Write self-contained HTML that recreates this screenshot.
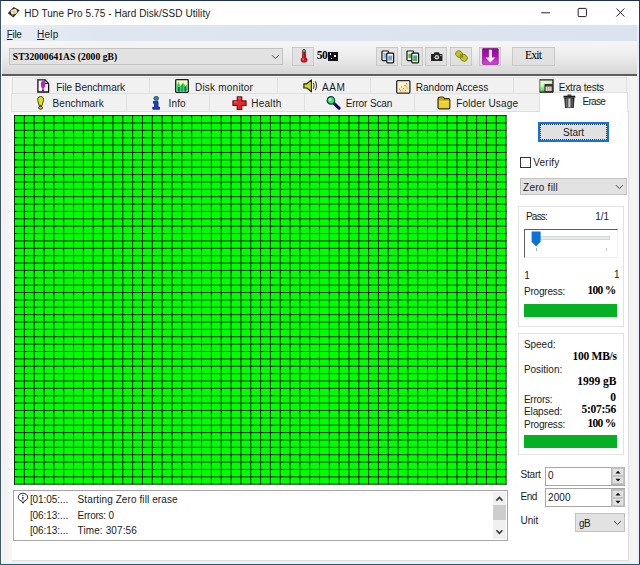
<!DOCTYPE html>
<html lang="en"><head><meta charset="utf-8"><title>HD Tune Pro 5.75 - Hard Disk/SSD Utility</title>
<style>
html,body{margin:0;padding:0}
body{width:640px;height:565px;position:relative;overflow:hidden;background:#f0f0f0;font:10px 'Liberation Sans',sans-serif;color:#000}
body *{position:absolute;box-sizing:border-box}
.t{white-space:pre;line-height:14px;height:14px;color:#1a1a1a}
.t u{position:static;text-decoration:underline;text-underline-offset:1px}
.sf{font-family:'Liberation Serif',serif;font-weight:bold;color:#000}
.sr{font-family:'Liberation Serif',serif;color:#000}
#frame{left:0;top:0;width:640px;height:565px;background:#2f3a50;border-left:1px solid #3d5566;border-top:0.8px solid #1e2f50;border-bottom:1.5px solid #256074}
#win{left:1px;top:0.75px;width:637.9px;height:562.8px;background:#f0f0f0}
#title{left:1px;top:0.75px;width:637.9px;height:23.85px;background:#fff}
#menu{left:1px;top:24.6px;width:637.9px;height:16.2px;background:linear-gradient(90deg,#eaeef5 0%,#dfe6f0 15%,#dbe3ee 100%)}
#tool{left:1px;top:40.8px;width:637.9px;height:33.5px;background:linear-gradient(#f1f3f6 0%,#f5f5f5 6%,#ececec 48%,#d6d6d6 100%)}
#sep{left:1px;top:73.9px;width:637.9px;height:1.7px;background:#5c5c5c}
#page{left:10.6px;top:111.2px;width:618.6px;height:449.6px;background:#fff;border:1px solid #dedede;border-top:none;border-left-color:#f4f4f4}
.tab{background:#f1f1f1;border:1px solid #e0e0e0;border-bottom:none}
.btn{background:rgba(222,222,222,0.7);border:1px solid #c9c9c9}
.combo{background:#e2e2e2;border:1px solid #c2c2c2}
.grp{border:1px solid #e2e2e2;background:#fff}
.bar{background:#06b025}
.inp{background:#fff;border:1.2px solid #a6a6a6}

</style></head>
<body>
<div id="frame"></div><div id="win"></div><div id="title"></div><div id="menu"></div><div id="tool"></div><div id="sep"></div>
<div style="left:630px;top:75.6px;width:7.4px;height:487.4px;background:#f4f4f4"></div><div style="left:637.3px;top:24.5px;width:1.6px;height:539px;background:#e9eff8"></div><div style="left:1px;top:24.5px;width:1px;height:539px;background:#f8fafc"></div><div style="left:1px;top:562.7px;width:637.9px;height:0.85px;background:#e6eef4"></div>
<svg style="left:7.1px;top:5.5px" width="14" height="13" viewBox="0 0 14 13"><path d="M0.8 7.2 L6.6 0.9 L12.6 4.2 L6.4 11.4 Z" fill="#2a2420"/><ellipse cx="6.9" cy="5.6" rx="3.3" ry="2.6" fill="#efe2bf" transform="rotate(-20 6.9 5.6)"/><circle cx="6.9" cy="5.6" r="0.9" fill="#c9b07c"/><path d="M4.6 8.6 L6.2 9.6" stroke="#e8e0d0" stroke-width="0.8"/></svg>
<svg style="left:536px;top:4px" width="96" height="18" viewBox="0 0 96 18"><g stroke="#222" stroke-width="1" fill="none"><path d="M5.2 8.8 H14"/><rect x="42.2" y="4.4" width="8.2" height="8.2" rx="0.8"/><path d="M80.4 4.5 L88.4 12.5 M88.4 4.5 L80.4 12.5"/></g></svg>
<div class="combo" style="left:9px;top:47.8px;width:274px;height:17.2px"></div>
<svg style="left:271px;top:54.1px" width="9" height="6" viewBox="0 0 9 6"><path d="M1 1.2 L4.4 4.6 L7.8 1.2" fill="none" stroke="#444" stroke-width="1"/></svg>
<div class="btn" style="left:292px;top:47.1px;width:22.2px;height:19.1px"></div>
<div class="btn" style="left:376.4px;top:47.1px;width:21.9px;height:19.1px"></div>
<div class="btn" style="left:400.9px;top:47.1px;width:21.9px;height:19.1px"></div>
<div class="btn" style="left:425.3px;top:47.1px;width:21.9px;height:19.1px"></div>
<div class="btn" style="left:450.2px;top:47.1px;width:21.9px;height:19.1px"></div>
<div class="btn" style="left:479.2px;top:47.1px;width:21.9px;height:19.1px"></div>
<div class="btn" style="left:512.2px;top:47.1px;width:42.8px;height:19.1px"></div>
<svg style="left:298.6px;top:49.2px" width="10.2" height="14.6" viewBox="0 0 11 16"><path d="M3.7 1.6 Q3.7 0.6 5.4 0.6 Q7.1 0.6 7.1 1.6 V9.2 Q8.9 10.2 8.9 12 Q8.9 14.6 5.5 14.6 Q2.1 14.6 2.1 12 Q2.1 10.2 3.7 9.2Z" fill="#e01a24" stroke="#6a0c10" stroke-width="0.7"/><path d="M3.9 1.2 H6.9 V3.2 H3.9Z" fill="#38b0a8"/><path d="M6.2 3.4 V9.6 Q8 10.6 8 12.2" stroke="#8a0c14" stroke-width="1" fill="none"/><circle cx="4.6" cy="11.6" r="0.8" fill="#ff9a9a"/></svg>
<div style="left:328.3px;top:52px;width:9.6px;height:8.7px;background:#111"></div><div style="left:329.6px;top:53.4px;width:1.8px;height:1.8px;background:#fff"></div><div style="left:333.6px;top:55.2px;width:2.2px;height:1.4px;background:#fff"></div><div style="left:331px;top:57.6px;width:1.4px;height:1.6px;background:#ddd"></div>
<svg style="left:381px;top:49.5px" width="14" height="14" viewBox="0 0 14 14"><rect x="1" y="1" width="6.6" height="9.6" rx="0.8" fill="#fff" stroke="#111" stroke-width="1.2"/><rect x="2.4" y="3" width="3.8" height="5.6" fill="#8fb8ea"/><rect x="5.8" y="3.2" width="6.8" height="9.6" rx="0.8" fill="#fff" stroke="#111" stroke-width="1.2"/><rect x="7.2" y="5.6" width="4" height="5" fill="#6f9fe0"/></svg>
<svg style="left:405.5px;top:49.5px" width="14" height="14" viewBox="0 0 14 14"><rect x="1" y="1" width="6.6" height="9.6" rx="0.8" fill="#fff" stroke="#111" stroke-width="1.2"/><rect x="2.4" y="3.6" width="3.8" height="4.6" fill="#46c046"/><rect x="5.8" y="3.2" width="6.8" height="9.6" rx="0.8" fill="#fff" stroke="#111" stroke-width="1.2"/><rect x="7.2" y="5.4" width="4" height="3" fill="#5a90e0"/><rect x="7.2" y="8" width="4" height="3" fill="#40b840"/></svg>
<svg style="left:430px;top:51px" width="14" height="11" viewBox="0 0 14 11"><path d="M1 3 h2.6 l1-1.8 h4.2 l1 1.8 h2.6 v7 h-11.4z" fill="#222"/><circle cx="6.8" cy="6.2" r="2.3" fill="#dcdcdc"/><circle cx="6.8" cy="6.2" r="1.1" fill="#555"/><rect x="10.2" y="4" width="1.4" height="1" fill="#9c9"/></svg>
<svg style="left:454.2px;top:48.8px" width="15" height="14" viewBox="0 0 15 14"><g transform="rotate(38 7.5 7)"><ellipse cx="4.4" cy="7" rx="3.6" ry="3.2" fill="#c3c321" stroke="#7e7e14" stroke-width="0.8"/><ellipse cx="10.4" cy="7" rx="3.8" ry="3.3" fill="#c3c321" stroke="#7e7e14" stroke-width="0.8"/><ellipse cx="7.4" cy="7" rx="2" ry="1.6" fill="#8c8c18"/></g></svg>
<svg style="left:482px;top:48px" width="17" height="17" viewBox="0 0 17 17"><defs><linearGradient id="pg" x1="0" y1="0" x2="0" y2="1"><stop offset="0" stop-color="#8a0f8a"/><stop offset="0.5" stop-color="#b010b0"/><stop offset="1" stop-color="#dc48dc"/></linearGradient></defs><rect x="0.3" y="0.2" width="16" height="16.2" rx="1.2" fill="url(#pg)" stroke="#7a0a7a" stroke-width="0.6"/><path d="M6.9 1.8 h3 v7.6 h3.4 l-4.9 5.2 l-4.9-5.2 h3.4z" fill="#fff"/></svg>
<div style="left:2px;top:75.6px;width:635px;height:1.9px;background:#fbfbfb"></div>
<div style="left:2px;top:77.5px;width:8.6px;height:485.2px;background:linear-gradient(90deg,#f1f1f1,#f3f3f3 60%,#f9f9f9)"></div>
<div class="tab" style="left:12px;top:77.4px;width:138px;height:16.2px"></div>
<div class="tab" style="left:149px;top:77.4px;width:129px;height:16.2px"></div>
<div class="tab" style="left:277px;top:77.4px;width:94px;height:16.2px"></div>
<div class="tab" style="left:370px;top:77.4px;width:144px;height:16.2px"></div>
<div class="tab" style="left:513px;top:77.4px;width:113.60000000000002px;height:16.2px"></div>
<div class="tab" style="left:10.6px;top:93.4px;width:116.60000000000001px;height:18px"></div>
<div class="tab" style="left:126.2px;top:93.4px;width:83.8px;height:18px"></div>
<div class="tab" style="left:209px;top:93.4px;width:96px;height:18px"></div>
<div class="tab" style="left:304px;top:93.4px;width:111px;height:18px"></div>
<div class="tab" style="left:414px;top:93.4px;width:126.60000000000002px;height:18px"></div>
<div id="page"></div>
<div style="left:10.6px;top:110.9px;width:530px;height:1px;background:#dedede"></div>
<div class="tab" style="left:539.4px;top:91.8px;width:88.8px;height:20.2px;background:#fff"></div>
<svg style="left:0;top:0" width="640" height="565" viewBox="0 0 640 565"><rect x="14.5" y="115.6" width="491.6" height="368.6" fill="#00ff00"/><path d="M14.50 115.1V484.7M24.34 115.1V484.7M34.19 115.1V484.7M44.03 115.1V484.7M53.88 115.1V484.7M63.72 115.1V484.7M73.56 115.1V484.7M83.41 115.1V484.7M93.25 115.1V484.7M103.10 115.1V484.7M112.94 115.1V484.7M122.78 115.1V484.7M132.63 115.1V484.7M142.47 115.1V484.7M152.32 115.1V484.7M162.16 115.1V484.7M172.00 115.1V484.7M181.85 115.1V484.7M191.69 115.1V484.7M201.54 115.1V484.7M211.38 115.1V484.7M221.22 115.1V484.7M231.07 115.1V484.7M240.91 115.1V484.7M250.76 115.1V484.7M260.60 115.1V484.7M270.42 115.1V484.7M280.24 115.1V484.7M290.06 115.1V484.7M299.88 115.1V484.7M309.70 115.1V484.7M319.52 115.1V484.7M329.34 115.1V484.7M339.16 115.1V484.7M348.98 115.1V484.7M358.80 115.1V484.7M368.62 115.1V484.7M378.44 115.1V484.7M388.26 115.1V484.7M398.08 115.1V484.7M407.90 115.1V484.7M417.72 115.1V484.7M427.54 115.1V484.7M437.36 115.1V484.7M447.18 115.1V484.7M457.00 115.1V484.7M466.82 115.1V484.7M476.64 115.1V484.7M486.46 115.1V484.7M496.28 115.1V484.7M506.10 115.1V484.7M14.0 115.60H506.6M14.0 122.97H506.6M14.0 130.34H506.6M14.0 137.72H506.6M14.0 145.09H506.6M14.0 152.46H506.6M14.0 159.83H506.6M14.0 167.20H506.6M14.0 174.58H506.6M14.0 181.95H506.6M14.0 189.32H506.6M14.0 196.69H506.6M14.0 204.06H506.6M14.0 211.44H506.6M14.0 218.81H506.6M14.0 226.18H506.6M14.0 233.55H506.6M14.0 240.92H506.6M14.0 248.30H506.6M14.0 255.67H506.6M14.0 263.04H506.6M14.0 270.41H506.6M14.0 277.78H506.6M14.0 285.16H506.6M14.0 292.53H506.6M14.0 299.90H506.6M14.0 307.27H506.6M14.0 314.64H506.6M14.0 322.02H506.6M14.0 329.39H506.6M14.0 336.76H506.6M14.0 344.13H506.6M14.0 351.50H506.6M14.0 358.88H506.6M14.0 366.25H506.6M14.0 373.62H506.6M14.0 380.99H506.6M14.0 388.36H506.6M14.0 395.74H506.6M14.0 403.11H506.6M14.0 410.48H506.6M14.0 417.85H506.6M14.0 425.22H506.6M14.0 432.60H506.6M14.0 439.97H506.6M14.0 447.34H506.6M14.0 454.71H506.6M14.0 462.08H506.6M14.0 469.46H506.6M14.0 476.83H506.6M14.0 484.20H506.6" stroke="#001000" stroke-width="0.88" fill="none"/></svg>
<div style="left:538.3px;top:122.1px;width:70.4px;height:19.5px;background:#e1e1e1;border:2.1px solid #1273d4"></div>
<div style="left:540px;top:123.8px;width:67px;height:16.1px;border:1px dotted #2a3a4a"></div>
<div style="left:520.2px;top:157.2px;width:10.6px;height:10.4px;background:#fff;border:1px solid #333"></div>
<div class="combo" style="left:520.2px;top:177.6px;width:106.6px;height:17.8px"></div>
<svg style="left:615px;top:184px" width="9" height="6" viewBox="0 0 9 6"><path d="M1 1.2 L4.4 4.6 L7.8 1.2" fill="none" stroke="#444" stroke-width="1"/></svg>
<div class="grp" style="left:518.2px;top:205.8px;width:106.2px;height:121.4px"></div>
<div style="left:523.8px;top:228.6px;width:93.8px;height:29.6px;background:#fff;border:1px solid #f0f0f0;border-top:1.2px solid #5e5e5e;border-left:1.2px solid #5e5e5e"></div>
<div style="left:539.8px;top:236.3px;width:70.2px;height:3.8px;background:#e7eaea;border:0.5px solid #d6d6d6"></div>
<svg style="left:530.9px;top:231.4px" width="10.5" height="16.5" viewBox="0 0 10.5 16.5"><path d="M0.6 0.4 h9 v10.4 l-4.5 4.8 l-4.5-4.8z" fill="#0a72d8"/></svg>
<div style="left:536px;top:248px;width:0.9px;height:3.4px;background:#a8b0b8"></div><div style="left:605.8px;top:248px;width:0.9px;height:3.4px;background:#c0c6cc"></div>
<div class="bar" style="left:523.9px;top:304.4px;width:93.6px;height:12.8px"></div>
<div class="grp" style="left:518.2px;top:332.6px;width:106.2px;height:122.8px"></div>
<div class="bar" style="left:523.9px;top:435.2px;width:93.6px;height:12.6px"></div>
<div class="inp" style="left:545px;top:466.5px;width:80px;height:19px"></div>
<div style="left:610.7px;top:466.7px;width:14.3px;height:18.6px;background:#ececec;border:1px solid #b9b9b9"></div>
<div style="left:611.6px;top:467.9px;width:12.5px;height:7.8px;background:#e2e2e2;border:0.7px solid #c4c4c4"></div>
<div style="left:611.6px;top:476.3px;width:12.5px;height:7.8px;background:#e2e2e2;border:0.7px solid #c4c4c4"></div>
<svg style="left:614.9px;top:470.1px" width="6" height="12" viewBox="0 0 6 12"><path d="M0.4 3.4 L3 0.8 L5.6 3.4z M0.4 8.8 L3 11.4 L5.6 8.8z" fill="#111"/></svg>
<div class="inp" style="left:545px;top:488.4px;width:80px;height:19px"></div>
<div style="left:610.7px;top:488.59999999999997px;width:14.3px;height:18.6px;background:#ececec;border:1px solid #b9b9b9"></div>
<div style="left:611.6px;top:489.79999999999995px;width:12.5px;height:7.8px;background:#e2e2e2;border:0.7px solid #c4c4c4"></div>
<div style="left:611.6px;top:498.2px;width:12.5px;height:7.8px;background:#e2e2e2;border:0.7px solid #c4c4c4"></div>
<svg style="left:614.9px;top:492.0px" width="6" height="12" viewBox="0 0 6 12"><path d="M0.4 3.4 L3 0.8 L5.6 3.4z M0.4 8.8 L3 11.4 L5.6 8.8z" fill="#111"/></svg>
<div class="combo" style="left:575.1px;top:513.2px;width:49.6px;height:18.4px"></div>
<svg style="left:613.4px;top:520px" width="9" height="6" viewBox="0 0 9 6"><path d="M1 1.2 L4.4 4.6 L7.8 1.2" fill="none" stroke="#444" stroke-width="1"/></svg>
<div style="left:13px;top:489.5px;width:495.2px;height:51.6px;background:#fff;border:1px solid #a6a6a6"></div>
<div style="left:493.2px;top:491.6px;width:12.6px;height:47.4px;background:#f0f0f0"></div>
<div style="left:493.2px;top:505px;width:12.6px;height:15px;background:#cdcdcd"></div>
<svg style="left:495.1px;top:496px" width="9" height="40" viewBox="0 0 9 40"><path d="M1.4 4.6 L4.4 1.5 L7.4 4.6 M1.4 34.2 L4.4 37.3 L7.4 34.2" fill="none" stroke="#3a3a3a" stroke-width="1.6"/></svg>
<svg style="left:17px;top:492px" width="12" height="12" viewBox="0 0 12 12"><path d="M4.6 9 L6 11.3 L7.4 9.2" fill="#fff" stroke="#222" stroke-width="0.9"/><ellipse cx="5.95" cy="5.25" rx="4.7" ry="4" fill="#fff" stroke="#262626" stroke-width="1"/><path d="M5.2 8.9 H6.8" stroke="#fff" stroke-width="1.2"/><circle cx="5.85" cy="3.5" r="0.75" fill="#2424d8"/><path d="M5.85 4.9 V7.5" stroke="#2424d8" stroke-width="1.4"/></svg>
<!-- tab icons -->
<svg style="left:36.6px;top:79.4px" width="13" height="14" viewBox="0 0 13 14"><path d="M0.9 0.9 H8 L11.6 4.4 V13 H0.9Z" fill="#fff" stroke="#111" stroke-width="1.3"/><path d="M7.9 0.9 V4.5 H11.6" fill="none" stroke="#111" stroke-width="0.9"/><path d="M6 1.5 C8.9 3 8.7 6.2 6.8 9.7 H5.2 C3.3 6.2 3.1 3 6 1.5Z" fill="#c41ac4"/><rect x="4.9" y="10.3" width="2.2" height="1.8" fill="#8a0c8a"/></svg>
<svg style="left:36.6px;top:95.6px" width="7.4" height="14" viewBox="0 0 7.4 14"><path d="M3.6 0.6 C6.3 0.6 6.8 2.4 6.4 4.8 L5 9.5 H2.2 L0.8 4.8 C0.4 2.4 0.9 0.6 3.6 0.6Z" fill="#dde222" stroke="#4a4a0a" stroke-width="1"/><ellipse cx="3.6" cy="11.8" rx="2" ry="1.4" fill="#d0d420" stroke="#3a3a08" stroke-width="1"/></svg>
<svg style="left:175.2px;top:79.2px" width="14" height="14" viewBox="0 0 14 14"><rect x="0.7" y="0.7" width="12.6" height="12.6" rx="0.8" fill="#f6f7c4" stroke="#1a1a1a" stroke-width="1.3"/><path d="M1.4 12.6 V6.5 L3.6 3 L5.6 7.2 L8 3.4 L10.4 7 L12.6 5.4 V12.6Z" fill="#2fe03a"/><rect x="3" y="8" width="1.8" height="4.6" fill="#2458c8"/><rect x="6.4" y="5.6" width="1.6" height="7" fill="#2a9a5a"/><rect x="9.4" y="7.6" width="1.8" height="5" fill="#2458c8"/></svg>
<svg style="left:151.9px;top:95.8px" width="8.5" height="14" viewBox="0 0 8.5 14"><ellipse cx="4.2" cy="2.4" rx="2.3" ry="1.9" fill="#2a93b8" stroke="#123c58" stroke-width="0.9"/><path d="M1.4 5.4 H6 V11.2 H7.6 V13.2 H0.8 V11.2 H2.6 V7.2 H1.4Z" fill="#1440d8" stroke="#0a1660" stroke-width="0.8"/></svg>
<svg style="left:231.6px;top:95.6px" width="15" height="14.5" viewBox="0 0 15 14.5"><path d="M5.2 0.9 H9.8 V4.9 H14.1 V9.5 H9.8 V13.6 H5.2 V9.5 H0.9 V4.9 H5.2Z" fill="#e8242a" stroke="#6a1010" stroke-width="1.1" stroke-linejoin="round"/><path d="M6 2 H8.6 M2 6 H5.6" stroke="#ff8a8a" stroke-width="0.8" fill="none"/></svg>
<svg style="left:302.8px;top:79.2px" width="15.5" height="14" viewBox="0 0 15.5 14"><path d="M0.9 4.8 H3.8 L8.4 0.9 V12.8 L3.8 9 H0.9Z" fill="#d6d820" stroke="#2c2c08" stroke-width="1.2" stroke-linejoin="round"/><path d="M10.2 4 Q12 6.8 10.2 9.8 M12.2 2.4 Q15 6.8 12.2 11.2" fill="none" stroke="#444" stroke-width="1.1"/></svg>
<svg style="left:326px;top:95.6px" width="15" height="14" viewBox="0 0 15 14"><path d="M7.6 7.2 L13 12.2" stroke="#0c0c5c" stroke-width="3.1" stroke-linecap="round"/><circle cx="4.9" cy="4.4" r="3.7" fill="#3be85a" stroke="#0a3a5a" stroke-width="1.2"/><circle cx="4" cy="3.5" r="1.2" fill="#b8ffc4"/></svg>
<svg style="left:396px;top:79.6px" width="15" height="14" viewBox="0 0 15 14"><rect x="0.7" y="0.7" width="13.2" height="12.4" rx="1" fill="#fbf3d0" stroke="#2a2a2a" stroke-width="1.3"/><g fill="#f0703a"><rect x="3" y="8.6" width="1.2" height="1.2"/><rect x="5" y="6.4" width="1.2" height="1.2"/><rect x="4" y="10.2" width="1.2" height="1.2"/><rect x="7" y="8" width="1.2" height="1.2"/><rect x="8.4" y="5" width="1.2" height="1.2"/><rect x="10" y="3.2" width="1.2" height="1.2"/><rect x="10.4" y="7.4" width="1.2" height="1.2"/><rect x="9" y="10" width="1.2" height="1.2"/></g><g fill="#f0c040"><rect x="6" y="9.6" width="1.2" height="1.2"/><rect x="9.6" y="5.8" width="1.2" height="1.2"/></g></svg>
<svg style="left:436.8px;top:95.6px" width="14" height="14" viewBox="0 0 14 14"><path d="M1 3.6 Q1 1 3.4 1 H5.6 Q7 1 7.4 2.6 H11.4 Q12.8 2.6 12.8 4.2 V11.4 Q12.8 12.8 11.4 12.8 H2.4 Q1 12.8 1 11.4Z" fill="#caa81a" stroke="#3a300a" stroke-width="1.2"/><path d="M2 5.4 H12 V11.8 H2Z" fill="#ecd22c"/><path d="M2 5.4 H12" stroke="#f8ec80" stroke-width="0.8"/></svg>
<svg style="left:538.8px;top:79.2px" width="15" height="14" viewBox="0 0 15 14"><defs><linearGradient id="eg" x1="0" y1="0" x2="0.4" y2="1"><stop offset="0" stop-color="#fdfde6"/><stop offset="0.45" stop-color="#d8f4c0"/><stop offset="1" stop-color="#22c838"/></linearGradient></defs><rect x="0.6" y="0.6" width="13.4" height="12.6" fill="url(#eg)"/><path d="M0.6 0.9 H14 V13.2 M0.6 13.2 H14" fill="none" stroke="#1a1a1a" stroke-width="1.3"/><path d="M0.8 0.9 V13.2" stroke="#2a7a2a" stroke-width="0.9"/><rect x="6" y="5.6" width="7.2" height="7" fill="#ecd0d0" stroke="#222" stroke-width="1"/><path d="M6 6.8 H13.2" stroke="#222" stroke-width="1.3"/><path d="M8.4 7.6 V12.4 M10.8 7.6 V12.4" stroke="#b08a8a" stroke-width="0.7"/></svg>
<svg style="left:563px;top:93.6px" width="13" height="14.5" viewBox="0 0 13 14.5"><defs><linearGradient id="tg" x1="0" y1="0" x2="1" y2="0"><stop offset="0" stop-color="#2a2a2a"/><stop offset="0.3" stop-color="#9a9a9a"/><stop offset="0.5" stop-color="#d8d8d8"/><stop offset="0.72" stop-color="#7a7a7a"/><stop offset="1" stop-color="#1a1a1a"/></linearGradient></defs><path d="M4.4 0.5 H8.4 V1.8 H4.4Z" fill="#222"/><path d="M0.5 1.7 H12.3 V3.7 H0.5Z" fill="#1c1c1c"/><path d="M1.7 4 H11.1 L10.3 13.8 H2.5Z" fill="url(#tg)" stroke="#111" stroke-width="0.8"/><path d="M4.7 4.6 V13 M8.1 4.6 V13" stroke="#2a2a2a" stroke-width="0.8"/></svg>

<div class="t" style="left:24.20px;top:6.83px;letter-spacing:0.068px;">HD Tune Pro 5.75 - Hard Disk/SSD Utility</div>
<div class="t" style="left:6.80px;top:27.54px;letter-spacing:-0.361px;"><u>F</u>ile</div>
<div class="t" style="left:37.00px;top:27.54px;letter-spacing:0.238px;"><u>H</u>elp</div>
<div class="t sf" style="left:12.82px;top:50.16px;font-size:9.6px;letter-spacing:0.015px;">ST32000641AS (2000 gB)</div>
<div class="t sf" style="left:316.84px;top:49.48px;font-size:11.6px;letter-spacing:-0.620px;">50</div>
<div class="t sr" style="left:525.04px;top:49.38px;font-size:11.6px;letter-spacing:-0.800px;">Exit</div>
<div class="t" style="left:56.20px;top:80.63px;letter-spacing:-0.056px;">File Benchmark</div>
<div class="t" style="left:195.00px;top:80.63px;letter-spacing:0.214px;">Disk monitor</div>
<div class="t" style="left:322.10px;top:80.63px;letter-spacing:0.577px;">AAM</div>
<div class="t" style="left:415.80px;top:80.63px;letter-spacing:0.010px;">Random Access</div>
<div class="t" style="left:558.80px;top:80.63px;letter-spacing:-0.194px;">Extra tests</div>
<div class="t" style="left:52.50px;top:96.93px;letter-spacing:0.073px;">Benchmark</div>
<div class="t" style="left:168.60px;top:96.93px;letter-spacing:0.121px;">Info</div>
<div class="t" style="left:251.20px;top:96.93px;letter-spacing:0.245px;">Health</div>
<div class="t" style="left:345.70px;top:96.93px;letter-spacing:-0.131px;">Error Scan</div>
<div class="t" style="left:456.20px;top:96.93px;letter-spacing:0.161px;">Folder Usage</div>
<div class="t" style="left:582.50px;top:94.93px;letter-spacing:-0.708px;">Erase</div>
<div class="t" style="left:563.10px;top:125.94px;letter-spacing:-0.052px;">Start</div>
<div class="t" style="left:533.20px;top:156.44px;letter-spacing:0.232px;">Verify</div>
<div class="t" style="left:523.10px;top:180.83px;letter-spacing:0.237px;">Zero fill</div>
<div class="t" style="left:526.00px;top:210.23px;letter-spacing:-0.800px;">Pass:</div>
<div class="t" style="left:595.30px;top:210.23px;letter-spacing:-0.099px;">1/1</div>
<div class="t" style="left:524.20px;top:269.34px;">1</div>
<div class="t" style="left:613.90px;top:268.34px;">1</div>
<div class="t" style="left:523.90px;top:285.04px;letter-spacing:-0.182px;">Progress:</div>
<div class="t sf" style="left:587.44px;top:283.12px;font-size:11.5px;letter-spacing:-0.688px;">100 %</div>
<div class="t" style="left:523.90px;top:337.64px;letter-spacing:-0.026px;">Speed:</div>
<div class="t sf" style="left:572.54px;top:349.12px;font-size:11.5px;letter-spacing:-0.262px;">100 MB/s</div>
<div class="t" style="left:523.90px;top:363.44px;">Position:</div>
<div class="t sf" style="left:577.34px;top:373.92px;font-size:11.5px;letter-spacing:-0.035px;">1999 gB</div>
<div class="t" style="left:523.90px;top:392.84px;letter-spacing:-0.225px;">Errors:</div>
<div class="t sf" style="left:610.14px;top:390.22px;font-size:11.5px;">0</div>
<div class="t" style="left:523.90px;top:404.54px;letter-spacing:-0.077px;">Elapsed:</div>
<div class="t sf" style="left:581.44px;top:402.12px;font-size:11.5px;letter-spacing:-0.246px;">5:07:56</div>
<div class="t" style="left:523.90px;top:417.64px;letter-spacing:-0.182px;">Progress:</div>
<div class="t sf" style="left:587.44px;top:415.72px;font-size:11.5px;letter-spacing:-0.688px;">100 %</div>
<div class="t" style="left:520.50px;top:468.14px;letter-spacing:-0.202px;">Start</div>
<div class="t" style="left:548.10px;top:469.14px;">0</div>
<div class="t" style="left:520.60px;top:490.04px;letter-spacing:-0.515px;">End</div>
<div class="t" style="left:548.10px;top:491.14px;letter-spacing:0.061px;">2000</div>
<div class="t" style="left:520.60px;top:514.34px;letter-spacing:-0.010px;">Unit</div>
<div class="t" style="left:579.10px;top:516.93px;letter-spacing:-0.751px;">gB</div>
<div class="t" style="left:29.90px;top:493.14px;letter-spacing:-0.071px;">[01:05:...</div>
<div class="t" style="left:77.60px;top:493.14px;letter-spacing:0.093px;">Starting Zero fill erase</div>
<div class="t" style="left:29.90px;top:508.64px;letter-spacing:-0.071px;">[06:13:...</div>
<div class="t" style="left:77.60px;top:508.64px;letter-spacing:-0.246px;">Errors: 0</div>
<div class="t" style="left:29.90px;top:524.43px;letter-spacing:-0.071px;">[06:13:...</div>
<div class="t" style="left:77.60px;top:524.43px;letter-spacing:0.106px;">Time: 307:56</div>
</body></html>
